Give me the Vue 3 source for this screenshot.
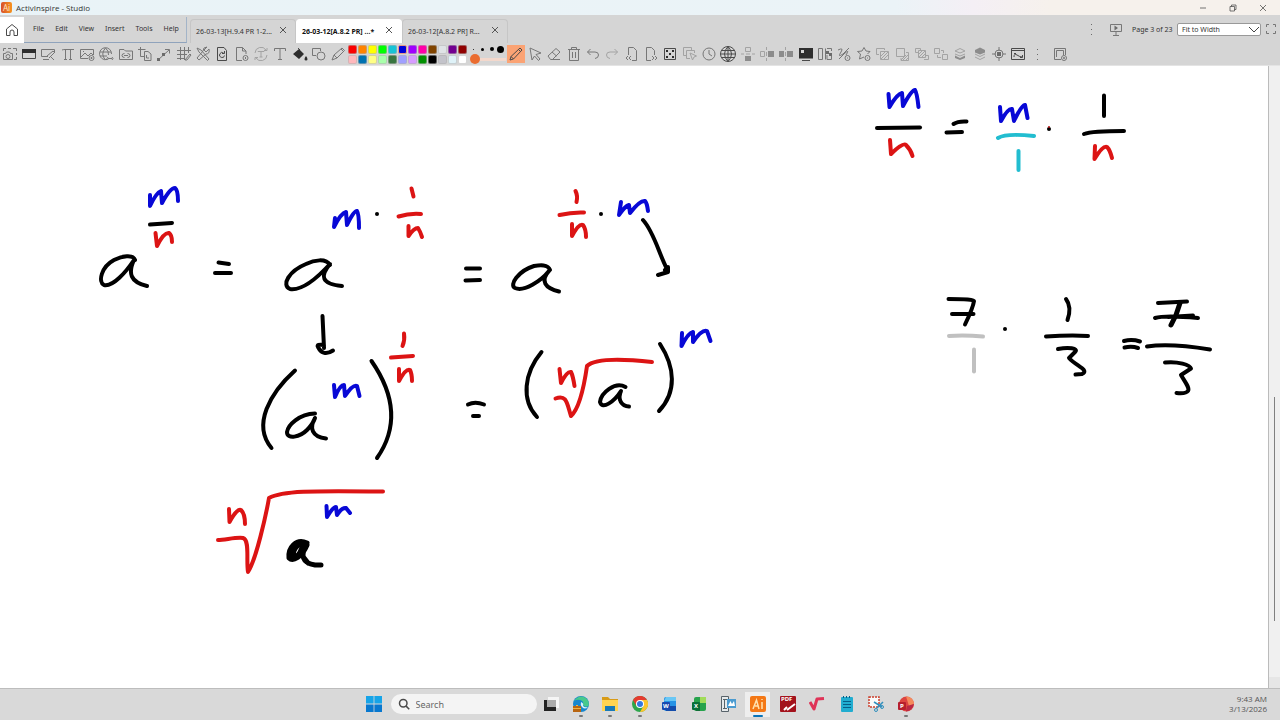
<template>
  <div class="studio">
    <header class="titlebar">
      <span class="logo">Ai</span>
      <h1 class="title">ActivInspire - Studio</h1>
      <div class="window-controls">
        <button v-for="c in windowControls" :key="c.label" :aria-label="c.label">
          <svg class="icon dark" viewBox="0 0 16 16"><path :d="c.d" /></svg>
        </button>
      </div>
    </header>

    <div class="tabs-row">
      <button class="home" aria-label="Home">
        <svg class="icon dark" viewBox="0 0 16 16"><path d="M2.5 7 8 2.5 13.5 7V13.5H10V10Q10 8 8 8T6 10V13.5H2.5Z" /></svg>
      </button>
      <nav class="menu">
        <button v-for="m in menus" :key="m">{{ m }}</button>
      </nav>
      <div class="tabs">
        <div v-for="(tab, i) in tabs" :key="i" :class="['tab', { active: i === activeTab }]">
          <button class="tab-name" @click="activeTab = i">{{ tab }}</button>
          <button class="tab-close" aria-label="Close tab">
            <svg viewBox="0 0 8 8"><path d="M1 1 7 7M7 1 1 7" /></svg>
          </button>
        </div>
      </div>
      <div class="page-tools">
        <button class="dots" aria-label="More">
          <svg class="icon" viewBox="0 0 16 16"><path class="solid" :d="moreDots" /></svg>
        </button>
        <button class="present" aria-label="Present">
          <svg class="icon" viewBox="0 0 16 16"><path d="M2.5 3.5H13.5V10.5H2.5ZM8 10.5V14M5 14.5H11" /><path class="solid" d="M6.5 4.5 10 7 6.5 9.5Z" /></svg>
        </button>
        <label class="page-label" for="zoom">Page 3 of 23</label>
        <div class="zoom">
          <select id="zoom" v-model="zoom">
            <option>Fit to Width</option>
            <option>Fit to Page</option>
          </select>
          <svg class="chevron" viewBox="0 0 12 8"><path d="M1 1 6 6 11 1" /></svg>
        </div>
        <button class="fullscreen" aria-label="Full screen">
          <svg class="icon" viewBox="0 0 16 16"><path d="M3.5 6V3.5H6M10 3.5H12.5V6M12.5 10V12.5H10M6 12.5H3.5V10" /></svg>
        </button>
      </div>
    </div>

    <div class="toolbar">
      <div class="tools left-tools">
        <button v-for="t in leftTools" :key="t.label" :aria-label="t.label">
          <svg :class="['icon', t.tone]" viewBox="0 0 16 16">
            <path v-if="t.d" :d="t.d" /><path v-if="t.fill" class="solid" :d="t.fill" />
          </svg>
        </button>
      </div>
      <div class="palette">
        <button
          v-for="c in palette"
          :key="c"
          :class="['swatch', { picked: c === penColor }]"
          :style="{ backgroundColor: c }"
          :aria-label="c"
          @click="penColor = c"
        ></button>
      </div>
      <div class="pen-width">
        <div class="pen-sizes">
          <button v-for="s in [1, 3, 4, 7]" :key="s" :aria-label="'Pen width ' + s">
            <i :style="{ width: s + 'px', height: s + 'px' }"></i>
          </button>
        </div>
        <input v-model.number="penWidth" type="range" min="0" max="100" aria-label="Pen width" />
      </div>
      <div class="tools right-tools">
        <button v-for="t in rightTools" :key="t.label" :class="{ selected: t.label === 'Pen' }" :aria-label="t.label">
          <svg :class="['icon', t.tone]" viewBox="0 0 16 16">
            <path v-if="t.d" :d="t.d" /><path v-if="t.fill" class="solid" :d="t.fill" />
          </svg>
        </button>
      </div>
      <button class="more" aria-label="More tools">
        <svg class="icon" viewBox="0 0 16 16"><path class="solid" :d="moreDots" /></svg>
      </button>
      <button class="customise" aria-label="Customise">
        <svg class="icon" viewBox="0 0 16 16"><path d="M9 13.5H2.5V2.5H13.5V9M4.5 11V4.5H11.5V9" /><circle cx="12" cy="12" r="2.5" /><path d="M12 11V13M11 12H13" /></svg>
      </button>
    </div>

    <main class="board">
      <svg class="flipchart" viewBox="0 66 1268 622" preserveAspectRatio="xMinYMin meet" role="img" aria-label="Flipchart">
        <g v-for="layer in ink" :key="layer.name" :class="['ink', layer.name]">
          <path v-for="d in layer.strokes" :key="d" :d="d" />
        </g>
        <circle v-for="p in inkDots" :key="p[0]" :cx="p[0]" :cy="p[1]" r="2" />
        <circle class="red-dot" cx="1049" cy="127" r="1" />
      </svg>
      <div class="scroll"><div class="thumb"></div></div>
    </main>

    <footer class="taskbar">
      <div class="dock">
        <button class="start" aria-label="Start">
          <svg viewBox="0 0 16 16"><path fill="#16a4e8" d="M0 0H7.6V7.6H0ZM8.4 0H16V7.6H8.4Z" /><path fill="#0878cf" d="M0 8.4H7.6V16H0ZM8.4 8.4H16V16H8.4Z" /></svg>
        </button>
        <label class="search">
          <svg class="icon dark" viewBox="0 0 16 16"><circle cx="7" cy="7" r="5" /><path d="M10.5 10.5 15 15" /></svg>
          <input type="text" placeholder="Search" aria-label="Search" />
        </label>
        <div class="apps">
          <button aria-label="Task view"><svg viewBox="0 0 16 16"><path fill="#f5f5f5" d="M5 1H16V12H5Z" /><path fill="#222" d="M1 4H13V15H1Z" /><path fill="#aaa" d="M4 4H13V11H4Z" /></svg></button>
          <button aria-label="Edge" class="running"><svg viewBox="0 0 16 16"><circle cx="8" cy="8" r="8" fill="#1686cf" /><path fill="#48c98c" d="M1 5Q5-1 11 1Q17 4 15.5 10Q12 12 10 9Q11 5 7 4Q4 3 1 5Z" /><path fill="#d9f2fb" d="M8 6Q11 7 10 10Q12 12 15 11Q12 14 9 11Q7 9 8 6Z" /><path fill="#b86511" d="M0 10H8V16H0Z" /><path fill="#f0b441" d="M0 12H8V13H0ZM3 9H5V10H3Z" /></svg></button>
          <button aria-label="File Explorer" class="running"><svg viewBox="0 0 16 16"><path fill="#d89b17" d="M0 1H6L8 3H16V7H0Z" /><path fill="#ffd452" d="M0 4H16V15H0Z" /><path fill="#1779b8" d="M3 10H13V15H3Z" /></svg></button>
          <button aria-label="Chrome" class="running"><svg viewBox="0 0 16 16"><circle cx="8" cy="8" r="8" fill="#2da64b" /><path fill="#e53c30" d="M1 4A8 8 0 0 1 15 4H8L4.5 10Z" /><path fill="#fdc52c" d="M15 4A8 8 0 0 1 8 16L11.5 10 8 4Z" /><circle cx="8" cy="8" r="4" fill="#fff" /><circle cx="8" cy="8" r="3" fill="#3477df" /></svg></button>
          <button aria-label="Word"><svg viewBox="0 0 16 16"><rect x="3" y="1" width="12" height="14" rx="2" fill="#2693e5" /><path fill="#69c7f5" d="M5 1H15V5H3Z" /><path fill="#134cab" d="M3 10H15V15H5Z" /><rect x="1" y="6" width="8" height="8" rx="1" fill="#1748b0" /><text x="2" y="12">W</text></svg></button>
          <button aria-label="Excel"><svg viewBox="0 0 16 16"><rect x="3" y="1" width="12" height="14" rx="2" fill="#27a34c" /><path fill="#a1dc5a" d="M9 1H15V7H9Z" /><path fill="#126c38" d="M3 10H9V15H5Z" /><rect x="1" y="6" width="8" height="8" rx="1" fill="#087038" /><text x="3" y="12">X</text></svg></button>
          <button aria-label="Media"><svg viewBox="0 0 16 16"><path fill="#e7eaeb" stroke="#58636a" d="M1.5 .5H8.5V15.5H1.5ZM3 3.5H7M3 12.5H7M4.5 4V12" /><rect x="7" y="3" width="9" height="9" fill="#4b9bd0" /><path fill="#fff" d="M8 10 10.5 5 12 8 14 5 15 10Z" /></svg></button>
          <button aria-label="ActivInspire" class="current"><svg viewBox="0 0 16 16"><rect width="16" height="16" rx="2" fill="#f47816" /><path fill="none" stroke="#ffe2b0" stroke-width="1.5" d="M3 13 6.5 4 9 13M5 10H8M12 6V13M12 3V4" /></svg></button>
          <button aria-label="PDF"><svg viewBox="0 0 16 16"><rect width="16" height="16" rx="1" fill="#a3121c" /><text x="1" y="5">PDF</text><path fill="none" stroke="#fff" stroke-width="2" d="M7 14 15 8M4 14 7 11" /></svg></button>
          <button aria-label="Root"><svg viewBox="0 0 16 16"><path fill="none" stroke="#df3458" stroke-width="3" stroke-linejoin="round" d="M1 6 5 13 8 3 15 2.5" /></svg></button>
          <button aria-label="Notepad"><svg viewBox="0 0 16 16"><rect x="2" y="1" width="12" height="15" rx="1" fill="#21add0" /><path fill="none" stroke="#075e87" d="M4 5.5H12M4 8.5H12M4 11.5H12M4.5 0V2M7.5 0V2M10.5 0V2" /></svg></button>
          <button aria-label="Snipping Tool"><svg viewBox="0 0 16 16"><path fill="#fafafa" stroke="#cc402e" stroke-width="1.5" stroke-dasharray="2 1" d="M1 1H11V11H1Z" /><path fill="none" stroke="#318fbd" stroke-width="1.5" d="M6 6 14 11M15 6 9 12" /><circle cx="8" cy="14" r="1.5" fill="none" stroke="#318fbd" /><circle cx="14" cy="11" r="1.5" fill="none" stroke="#318fbd" /></svg></button>
          <button aria-label="PowerPoint" class="running"><svg viewBox="0 0 16 16"><circle cx="8.5" cy="8" r="7.5" fill="#dd4440" /><path fill="#f58a5b" d="M8 0.5A7.5 7.5 0 0 1 16 8L11 10Z" /><path fill="#ba2844" d="M8 15.5Q14 15 16 8L9 10Z" /><rect x="0" y="6" width="8" height="8" rx="1" fill="#b61f2c" /><text x="2" y="12">P</text></svg></button>
        </div>
      </div>
      <div class="clock"><time>9:43 AM</time><time>3/13/2026</time></div>
    </footer>
  </div>
</template>

<script setup>
import { ref } from 'vue'

const menus = ['File', 'Edit', 'View', 'Insert', 'Tools', 'Help']
const tabs = ['26-03-13[H.9.4 PR 1-2...', '26-03-12[A.8.2 PR] ...*', '26-03-12[A.8.2 PR] R...']
const activeTab = ref(1)
const zoom = ref('Fit to Width')
const penColor = ref('#0000d8')
const penWidth = ref(0)

const moreDots = 'M7 3H8V4H7ZM7 8H8V9H7ZM7 13H8V14H7Z'

const windowControls = [
  { label: 'Minimise', d: 'M4 8H12' },
  { label: 'Restore', d: 'M4 6H10V12H4ZM6 6V4H12V10H10' },
  { label: 'Close', d: 'M4 4 12 12M12 4 4 12' }
]

// first row of swatches, then the second
const palette = [
  '#fa0000', '#ff8400', '#ffff00', '#00ff00', '#17c3d6', '#0000d8', '#a000ff', '#ff00a8', '#804400', '#dfe3e6', '#720090', '#900000',
  '#ffb8bc', '#0072b0', '#ffff85', '#a8ffaa', '#397540', '#a0a0ff', '#d69cff', '#009000', '#000000', '#c3c3ca', '#dff2f8', '#ffffff'
]

const leftTools = [
  { label: 'Camera', d: 'M1.5 5V2.5H4M6 2.5H9M11 2.5H14.5V5M14.5 7V9M14.5 11V13.5H12M1.5 13.5V7.5H3.5L4.5 6H7.5L8.5 7.5H10.5V13.5ZM4 10.5A2 2 0 1 0 8 10.5A2 2 0 1 0 4 10.5' },
  { label: 'Desktop', tone: 'dark', d: 'M1.5 3.5H14.5V12.5H1.5Z', fill: 'M1 3H15V7H1Z' },
  { label: 'Screen annotate', d: 'M8 10.5H1.5V3.5H14.5V7M3 13.5H9M7 10 13 5 14.5 6.5 9 12M11 11 14 14' },
  { label: 'Equation', d: 'M2 4Q3 3.5 5 3.5H14M5.5 3.5V13.5M10.5 3.5V13.5M4 13.5H7M9 13.5H12' },
  { label: 'Insert picture', d: 'M9 12.5H1.5V3.5H14.5V9M2 11 6 7 9 10 12 7 14 9M4 5.5H5M10 12A2.5 2.5 0 1 0 15 12A2.5 2.5 0 1 0 10 12M12.5 11V13M11.5 12H13.5' },
  { label: 'Insert web link', d: 'M9 13.5A6 6 0 1 1 13.5 8M7.5 2Q2 8 7.5 14M7.5 2Q11 5 10.5 9M2 6H13M2 10H9M10 12.5H14M10 11Q8 12.5 10 14M14 11Q16 12.5 14 14' },
  { label: 'Linked folder', d: 'M1.5 13.5V3.5H6L7.5 5H14.5V13.5ZM6.5 7.5Q4 7.5 4 9.5T6.5 11.5M9.5 7.5Q12 7.5 12 9.5T9.5 11.5M6 9.5H10' },
  { label: 'Copy page', d: 'M3.5 1V10.5H7M1 3.5H8.5M7.5 5.5H11L14 8V14.5H7.5ZM9.5 9V12H12' },
  { label: 'Connector', d: 'M2 14 13 4M9 3.5H13.5V7.5', fill: 'M1 12H4V15H1ZM6 7H9V10H6Z' },
  { label: 'Grid', d: 'M4.5 1V14M8.5 1V14M12.5 1V7M1 4.5H15M1 8.5H11M1 12.5H8M9 14 14 8 15 9 11 14Z' },
  { label: 'Tools', d: 'M2 2 6 4 14 13 12.5 14.5 4 6ZM14 3 11 6 9 4 12 1Q8 1 8 5L2 12 4 14 11 8Q15 8 14 3' },
  { label: 'Reset page', tone: 'dark', d: 'M3.5 1.5H10L12.5 4.5V14.5H3.5ZM9.5 7A2.5 2.5 0 1 0 10.5 9.5M10.5 5V7.5H8' },
  { label: 'New page', d: 'M8 14.5H2.5V1.5H8.5L12 5V8M8.5 1.5V5H12M9 12A2.5 2.5 0 1 0 14 12A2.5 2.5 0 1 0 9 12M11.5 11V13' },
  { label: 'Text recognise', tone: 'faint', d: 'M2 7A6 6 0 0 1 13 4M14 9A6 6 0 0 1 3 12M11 4.5H14V2M5 11.5H2V14M5 6V5.5H11V6M8 5V11M6.5 11H9.5' },
  { label: 'Text', d: 'M2.5 5V2.5H13.5V5M8 2.5V13.5M6 13.5H10' },
  { label: 'Fill', tone: 'dark', d: 'M6 2 8 4', fill: 'M1 8 7 3 12 8 7 13ZM14 10Q17 14 14 14.5Q11 14 14 10' },
  { label: 'Shape', d: 'M5 9.5H1.5V2.5H9.5V5M6 10A4 4 0 1 0 14 10A4 4 0 1 0 6 10' },
  { label: 'Highlighter', d: 'M2 14 4 9 12 2 14.5 4.5 7 12ZM4 9 7 12M11 3 13.5 5.5' }
]

const rightTools = [
  { label: 'Pen', tone: 'dark', d: 'M2 14 3 10.5 12 2 14 4 5.5 13ZM3 10.5 5.5 13M10.5 3.5 12.5 5.5' },
  { label: 'Select', d: 'M3 2 14 7 9 8.5 13 13 11.5 14.5 7.5 10 5 14Z' },
  { label: 'Eraser', d: 'M2 10 10 2.5 14 6 6.5 13.5H4.5ZM6 6 10.5 10M6 13.5H14' },
  { label: 'Clear', d: 'M2 3.5H14M5.5 3.5V1.5H10.5V3.5M3.5 3.5V14.5H12.5V3.5M6.5 6V12M9.5 6V12' },
  { label: 'Undo', d: 'M5.5 3 2.5 6 5.5 9M2.5 6H10Q13.5 6 13.5 9T10 12.5' },
  { label: 'Redo', tone: 'faint', d: 'M10.5 3 13.5 6 10.5 9M13.5 6H6Q2.5 6 2.5 9T6 12.5' },
  { label: 'Previous page', d: 'M4.5 9V1.5H9.5L12.5 4.5V14.5H8M4 10 2 12 4 14M7 10 5 12 7 14' },
  { label: 'Next page', d: 'M8 14.5H3.5V1.5H8.5L11.5 4.5V9M9 10 11 12 9 14M12 10 14 12 12 14' },
  { label: 'Dice', tone: 'dark', d: 'M2.5 2.5H13.5V13.5H2.5Z', fill: 'M4 4H6V6H4ZM10 4H12V6H10ZM7 7H9V9H7ZM4 10H6V12H4ZM10 10H12V12H10Z' },
  { label: 'Select copies', tone: 'faint', d: 'M4 9.5H1.5V1.5H9.5V4M8 12.5H4.5V4.5H12.5V7M8 7 14.5 10 12 11 10.5 14Z' },
  { label: 'Clock', d: 'M2 8A6 6 0 1 0 14 8A6 6 0 1 0 2 8M8 4V8L11 10' },
  { label: 'Browser', tone: 'dark', d: 'M.5 8A7.5 7.5 0 1 0 15.5 8A7.5 7.5 0 1 0 .5 8M8 .5V15.5M.5 8H15.5M2 4.5H14M2 11.5H14M8 .5Q1 8 8 15.5Q15 8 8 .5' },
  { label: 'Flip vertical', tone: 'faint', d: 'M5.5 1.5H10.5V5.5H5.5ZM1 8H4M6 8H10M12 8H15', fill: 'M5 10H11V15H5Z' },
  { label: 'Flip horizontal', tone: 'faint', d: 'M1.5 5.5H5.5V10.5H1.5ZM7.5 1V4M7.5 6V10M7.5 12V15', fill: 'M9 5H15V11H9Z' },
  { label: 'Mirror', tone: 'faint', d: 'M7.5 1V4M7.5 6V10M7.5 12V15', fill: 'M1 5H6V11H1ZM9 5H15V11H9Z' },
  { label: 'Revealer', tone: 'dark', d: 'M4 14.5H12', fill: 'M1 2H15V12.5H1ZM3 4V7H6V4Z' },
  { label: 'Spotlight', d: 'M5.5 13.5H1.5V2.5H5.5V13.5M8.5 2.5V13.5M10 2.5H14.5V5M14.5 10V13.5H10V9', fill: 'M9 5H12V8H9ZM12 7H15V10H12Z' },
  { label: 'Magic ink', d: 'M2 4Q8 1 5 6Q1 12 7 8L13 2M3 13 9 7Q14 3 10 9M9 12A2.5 2.5 0 1 0 14 12A2.5 2.5 0 1 0 9 12M11 12H12' },
  { label: 'Favourite', d: 'M8 11 3.5 13 4.5 8 1.5 5.5 6 5 8 1.5 10 5 14 5.5 11.5 8M9 12A2.5 2.5 0 1 0 14 12A2.5 2.5 0 1 0 9 12M11 12H12' },
  { label: 'Bring to front', tone: 'faint', d: 'M4 8.5H1.5V2.5H9.5V4M5.5 5.5H13.5V13.5H5.5ZM6 10 10 6M6 13 13 6M9 13 13 9' },
  { label: 'Send to back', tone: 'faint', d: 'M2.5 2.5H10.5V10.5H2.5ZM12 6.5H14.5V14.5H7V12M9 14 14 9M12 14 14 12M7 14 12 9' },
  { label: 'Bring forward', tone: 'faint', d: 'M4 6.5H1.5V2.5H6.5V4M10 13.5H14.5V9.5H12M4.5 4.5H11.5V11.5H4.5ZM5 8 8 5M5 11 11 5M8 11 11 8' },
  { label: 'Send backward', tone: 'faint', d: 'M1.5 2.5H6.5V7.5H1.5ZM9.5 8.5H14.5V13.5H9.5ZM8 4.5H10.5V7M4.5 9V11.5H8' },
  { label: 'Layer down', tone: 'faint', d: 'M3 5 8 2.5 13 5 8 7ZM3 8 8 10 13 8', fill: 'M3 9.5 8 12 13 9.5V12L8 14 3 12Z' },
  { label: 'Layer up', tone: 'faint', d: 'M3 8 8 10.5 13 8M3 11 8 13.5 13 11', fill: 'M8 1.5 13 4V6.5L8 8.5 3 6.5V4Z' },
  { label: 'Centre', d: 'M4 8A4 4 0 1 0 12 8A4 4 0 1 0 4 8M8 1V5M8 11V15M1 8H5M11 8H15', fill: 'M6 6H10V10H6Z' },
  { label: 'Background', tone: 'dark', d: 'M1.5 2.5H14.5V13.5H1.5ZM2 4.5H14M4 11Q4 7 7 9T12 11M4 7.5H6M10 11.5H12.5V9' }
]

// pen strokes grouped by ink colour
const ink = [
  {
    name: 'black',
    strokes: [
      'M150 224.5 172 223',
      'M135 260C133 254 122 256 114 260C101 267 98 282 104 285C113 287 126 272 134 260C128 273 130 282 147 286',
      'M218.5 262.5 229 264M215 273H231',
      'M330 265C326 258 314 260 306 264C289 271 281 285 290 289C303 291 320 275 330 264C320 276 321 284 342 286',
      'M322.5 316 324 348M324 345Q316 344 318 347Q323 357 333 350.5',
      'M466 268.5H480M465.5 280.5 480 280',
      'M550 270C548 264 540 265 534 266C518 271 509 285 515 288C524 292 541 281 549 271C540 281 545 288 559 291.5',
      'M643 220C654 232 659 254 667 269M658 275 668 272V267L665 270',
      'M295 370.5C270 393 252 425 271.5 448',
      'M371.5 361C395 395 398 428 377 458',
      'M315 413.5C299 414 288 425 287 432C287 440 300 437 307 430Q313 424 315 418C309 428 312 437 326 438.5',
      'M468 404.5Q475 401 484 404.5M473 416H479',
      'M541.5 352C524 373 521 400 537 417',
      'M660 344C675 367 677 392 659 411',
      'M625.5 387C615 381 601 393 600 402C602 410 614 402 621 391C617 400 622 406 629 406.5',
      'M877 128 920 127.5',
      'M953.5 124Q958 121 966.5 121.5M946.5 132.5 962 132',
      'M1104 95.5V116M1084 134Q1092 131 1124 131',
      'M948.5 299Q974 299 974 301Q973 308 965 324.5M952 314H973.5',
      'M1066 299Q1072 307 1067.5 320M1046 336.5Q1070 335 1088 336',
      'M1058 349C1068 347 1079 348 1075 352L1069 358C1076 366 1090 370 1082 374L1075.5 374.5',
      'M1124 341Q1132 339 1140 341.5M1124.5 347.5Q1132 346 1138 348',
      'M1158 303 1187 301.5M1155 318Q1165 315 1198 318M1168 317 1193 315.5',
      'M1147 346.5Q1170 343 1210 349.5',
      'M1165 362.5C1178 361 1190 365 1191 368.5L1181 375C1185 382 1190 388 1188 391Q1186 394 1176.5 393'
    ]
  },
  {
    name: 'bold',
    strokes: [
      'M307 543C296 538 288 548 289 558C293 562 302 557 307 545C300 555 302 563 315 565L321 565M303 543C294 545 291 556 295 557C302 554 300 548 304 545M301 554 308 563',
      'M1180 303 1176 315 1171 325'
    ]
  },
  {
    name: 'blue',
    strokes: [
      'M150 195V206Q156 193 161 191L162 203Q170 188 175 188Q178 190 178 201',
      'M335 218 334 227Q341 213 346 212L347 225Q354 210 357 211Q359 214 359 228',
      'M621 202 619 215Q625 206 629 205L630 213Q640 200 645 201Q647 203 648 211',
      'M334 385 335 397Q340 385 344 385L345 396Q353 384 357 386L359.5 396',
      'M326.5 506 327 517Q333 507 336 507L337 515Q342 507 346 508L350 513',
      'M682 333 681.5 346Q688 333 693 332L693 342Q702 329 707 331L710.5 341',
      'M888.5 94 889.5 107Q897 94 902 93L903 106Q912 89 915 90Q917 93 918.5 107',
      'M1000 107 1001 121Q1008 108 1012 109L1014 121Q1022 104 1025 105L1027.5 118'
    ]
  },
  {
    name: 'red',
    strokes: [
      'M155.5 233 157 246Q164 232 169 233Q172 235 172 242',
      'M411.5 188.5 413.5 196.5M398.5 216.5Q410 213 421 214',
      'M408.5 226V236Q414 228 418 228Q420 231 422 237',
      'M404 333.5Q405 340 402.5 346M391 357.5 413 356',
      'M399 369V381Q406 368 410 370Q412 374 412 381',
      'M575.5 191Q578 196 576.5 202M559.5 215Q572 212 584 212.5',
      'M572 224V236Q579 223 583 225Q586 229 586 237',
      'M218 540C225 540 236 537 243 538C250 540 246 560 248 572C256 560 266 515 269 498C283 490 320 491 383 491.5',
      'M229 509 229.5 522Q237 508 241 510Q245 514 245 524',
      'M555.5 398.5C567 394 567 404 571 416C581 407 585 380 587 366C595 358 625 359 652 362',
      'M559.5 369 561 383Q567 371 571 372Q573 376 574.5 386',
      'M890 140 891 154Q903 142 906 145Q911 150 912.5 156',
      'M1095 146 1094.5 159Q1103 145 1107 147Q1110 150 1112 158'
    ]
  },
  { name: 'cyan', strokes: ['M998 138Q1006 133 1034 136', 'M1018.5 151V170'] },
  { name: 'grey', strokes: ['M949 336Q965 335 983 336.5', 'M974 349.5V371.5'] }
]

const inkDots = [[377, 214], [601, 214], [1049, 129], [1005, 329]]
</script>

<style>
body {
  margin: 0;
}
</style>

<style scoped>
.studio {
  display: flex;
  flex-direction: column;
  min-height: 100vh;
  background: #fff;
  color: #333;
  font-family: 'Noto Sans', 'Open Sans', sans-serif;
  font-size: 7px;
}

button {
  display: flex;
  align-items: center;
  justify-content: center;
  padding: 0;
  border: none;
  background: none;
  color: inherit;
  font: inherit;
}

.icon {
  width: 16px;
  height: 16px;
  flex: none;
  fill: none;
  stroke: #777;
}

.icon .solid {
  fill: #6b6b6b;
  fill-rule: evenodd;
  stroke: none;
}

.icon.dark {
  stroke: #4a4a4a;
}

.icon.dark .solid {
  fill: #2e2e2e;
}

.icon.faint {
  stroke: #a3a3a3;
}

.icon.faint .solid {
  fill: #8c8c8c;
}

.titlebar {
  display: flex;
  align-items: center;
  height: 15px;
  background: linear-gradient(90deg, #e9f3f7 0%, #ebf3f7 70%, #f4eff5 76%, #f6f1ec 82%);
}

.logo {
  width: 11px;
  height: 11px;
  margin: 0 4px 0 1px;
  border-radius: 2px;
  background: linear-gradient(90deg, #d8502b, #f7941d);
  color: #ffe3c2;
  font-size: 8px;
  line-height: 11px;
  text-align: center;
}

.title {
  flex: 1;
  margin: 0;
  font-family: 'Open Sans', 'Noto Sans', sans-serif;
  font-size: 8px;
  font-weight: 400;
  line-height: 15px;
}

.window-controls {
  display: flex;
  gap: 14px;
  margin-right: 9px;
}

.window-controls .icon {
  width: 12px;
  height: 12px;
}

.window-controls button {
  width: 16px;
}

.tabs-row {
  display: flex;
  height: 28px;
  background: #d5d5d5;
}

.home {
  width: 24px;
  margin-top: 2px;
  background: #fff;
}

.menu {
  display: flex;
  gap: 11px;
  box-sizing: border-box;
  width: 163px;
  margin-top: 2px;
  padding: 0 9px 3px;
  border-right: 1px solid #a3b4c8;
  border-bottom: 1px solid #8fa3bc;
}

.tabs {
  display: flex;
  flex: 1;
  padding: 4px 0 0 3px;
}

.tab {
  display: flex;
  align-items: center;
  justify-content: space-between;
  box-sizing: border-box;
  width: 106px;
  padding: 0 8px 0 5px;
  border: 1px solid #c6c6c6;
  border-bottom: none;
  border-radius: 4px 4px 0 0;
}

.tab.active {
  border-color: #fff;
  background: #fff;
  color: #111;
  font-weight: 700;
}

.tab-name {
  white-space: nowrap;
}

.tab-close {
  padding-bottom: 4px;
}

.tab-close svg {
  width: 8px;
  height: 8px;
  stroke: #555;
}

.page-tools {
  display: flex;
  align-items: center;
}

.dots {
  margin-right: 8px;
}

.present {
  margin-right: 8px;
}

.page-label {
  width: 45px;
  white-space: nowrap;
}

.zoom {
  position: relative;
  width: 84px;
  height: 13px;
}

.zoom select {
  display: block;
  width: 100%;
  height: 100%;
  padding: 0 4px;
  border: 1px solid #999;
  border-radius: 2px;
  appearance: none;
  background: #fff;
  color: #333;
  font: inherit;
}

.chevron {
  position: absolute;
  top: 3px;
  right: 1px;
  width: 12px;
  height: 8px;
  fill: none;
  stroke: #444;
  pointer-events: none;
}

.fullscreen {
  margin: 0 1px 0 2px;
}

.toolbar {
  display: flex;
  align-items: center;
  height: 22px;
  border-bottom: 1px solid #e4e4e4;
  background: #d5d5d5;
}

.tools {
  display: flex;
  justify-content: space-around;
}

.tools button {
  width: 18px;
  height: 18px;
}

.left-tools {
  width: 348px;
}

.right-tools {
  width: 522px;
}

.tools .selected {
  background: #fba374;
}

.palette {
  display: grid;
  grid-template-columns: repeat(12, 9px);
  gap: 1px;
  width: 120px;
}

.swatch {
  height: 9px;
  border: 1px solid #b0b0b088;
  border-radius: 2px;
}

.swatch.picked {
  border-color: #e79a86;
}

.pen-width {
  width: 38px;
}

.pen-sizes {
  display: flex;
  padding-left: 1px;
}

.pen-sizes button {
  width: 9px;
  height: 10px;
}

.pen-sizes i {
  border-radius: 50%;
  background: #000;
}

.pen-width input {
  display: block;
  width: 36px;
  height: 10px;
  margin: 0 0 0 2px;
  appearance: none;
  background: linear-gradient(#f3d8cc, #f3d8cc) center / 100% 3px no-repeat;
}

.pen-width input::-webkit-slider-thumb {
  width: 10px;
  height: 10px;
  border-radius: 50%;
  appearance: none;
  background: #ea6c30;
}

.more {
  width: 20px;
}

.customise {
  margin-left: 4px;
}

.board {
  display: flex;
  flex: 1;
}

.flipchart {
  display: block;
  flex: 1;
  min-width: 0;
}

.ink {
  fill: none;
  stroke-width: 4;
  stroke-linecap: round;
  stroke-linejoin: round;
}

.black,
.bold {
  stroke: #000;
}

.bold {
  stroke-width: 5;
}

.blue {
  stroke: #0808d6;
}

.red {
  stroke: #dc1414;
}

.red-dot {
  fill: #b01010;
}

.cyan {
  stroke: #22bdd0;
}

.grey {
  stroke: #c0c0c0;
}

.scroll {
  box-sizing: border-box;
  width: 12px;
  padding-left: 5px;
  border-left: 1px solid #bbb;
  background: linear-gradient(#e6e6e6, #e6e6e6) bottom / 100% 11px no-repeat #f0f0f0;
}

.thumb {
  width: 1px;
  height: 36%;
  margin-top: 331px;
  background: #808080;
}

.taskbar {
  display: grid;
  grid-template-columns: 1fr auto 1fr;
  align-items: center;
  box-sizing: border-box;
  height: 32px;
  padding-bottom: 1px;
  border-top: 1px solid #bdbdbd;
  background: #d9d9d9;
}

.dock {
  display: flex;
  grid-column: 2;
  align-items: center;
}

.start {
  width: 29px;
  margin-right: 2px;
}

.dock button > svg {
  width: 16px;
  height: 16px;
}

.search {
  display: flex;
  align-items: center;
  gap: 6px;
  box-sizing: border-box;
  width: 146px;
  height: 20px;
  padding: 0 7px;
  border-radius: 10px;
  background: #f4f4f4;
}

.search .icon {
  width: 12px;
  height: 12px;
  stroke-width: 2;
}

.search input {
  width: 100px;
  padding: 0;
  border: none;
  outline: none;
  background: none;
  font: inherit;
  font-size: 9px;
}

.search input::placeholder {
  color: #666;
}

.apps {
  display: flex;
  justify-content: space-around;
  width: 384px;
}

.apps button {
  position: relative;
  width: 25px;
  height: 25px;
}

.apps text {
  fill: #fff;
  font-size: 6px;
  font-weight: 700;
}

.apps .current {
  background: #eee;
}

.running::after,
.current::after {
  content: '';
  position: absolute;
  bottom: 0;
  width: 4px;
  height: 2px;
  border-radius: 1px;
  background: #777;
}

.current::after {
  width: 10px;
  background: #0873b8;
}

.clock {
  display: flex;
  flex-direction: column;
  padding-right: 13px;
  color: #555;
  font-family: 'Open Sans', 'Noto Sans', sans-serif;
  font-size: 8px;
  line-height: 10px;
  text-align: right;
}
</style>
